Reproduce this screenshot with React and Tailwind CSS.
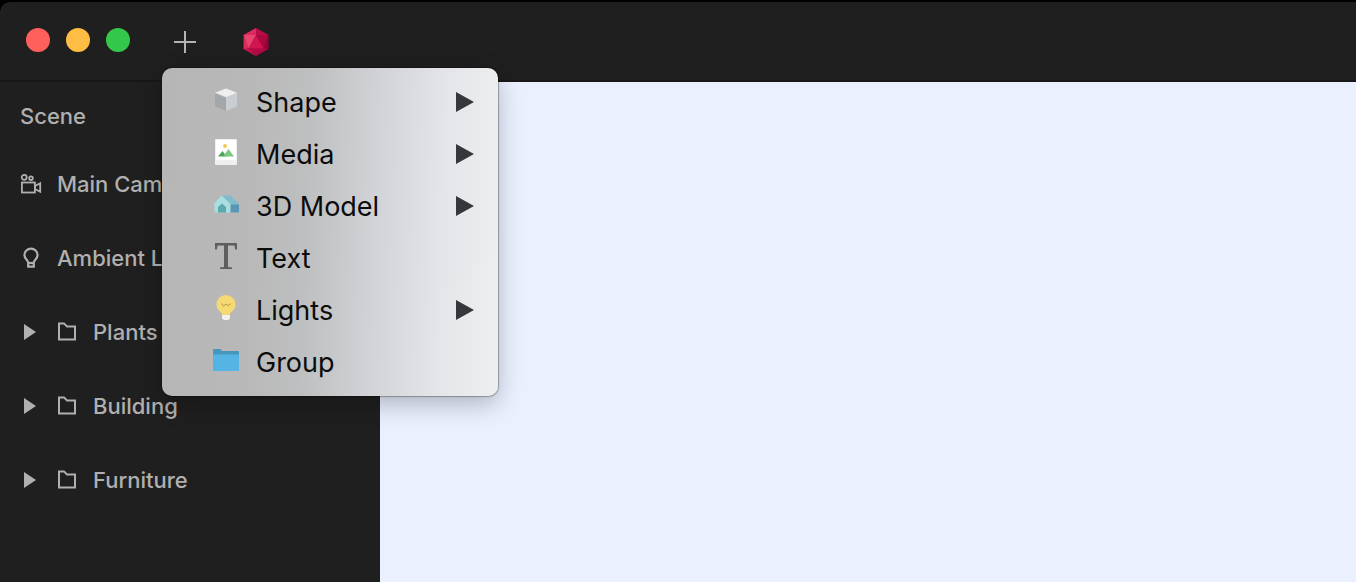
const CameraIcon = () => (
  <svg className="size-6 shrink-0" viewBox="0 0 24 24" fill="none" stroke="#b0b0b0" strokeWidth="1.8" aria-hidden="true">
    <circle cx="5.2" cy="5.3" r="2.5" />
    <circle cx="12" cy="6.2" r="1.8" />
    <rect x="2.9" y="10.500" width="13" height="10" />
    <path d="M16 14l5.200-2.800v8.600L16 17z" />
  </svg>
);

const BulbIcon = () => (
  <svg className="size-6 shrink-0" viewBox="0 0 24 24" fill="none" stroke="#b0b0b0" strokeWidth="2.200" aria-hidden="true">
    <path d="M9.200 16.500c0-2.400-3.800-3.600-3.800-7.400a6.600 6.400 0 0 1 13.200 0c0 3.800-3.800 5-3.800 7.400v4.100H9.200z" />
    <path d="M9.200 17h5.600" />
  </svg>
);

const FolderIcon = () => (
  <svg className="size-5 shrink-0" viewBox="0 0 20 20" fill="none" stroke="#b0b0b0" strokeWidth="2" aria-hidden="true">
    <path d="M2 1.400h5l3 3h8v13H2z" />
  </svg>
);

const GemIcon = () => (
  <svg className="h-7 w-[26px]" viewBox="0 0 26 28" aria-hidden="true">
    <path d="M13 0l12.300 7v14L13 28 .7 21V7z" fill="#b00a45" />
    <path d="M13 0v7L.7 7z" fill="#dd2b5d" />
    <path d="M13 0v7l12.300 0z" fill="#b80d48" />
    <path d="M.7 7L13 7 5.500 20.500z" fill="#e8466f" />
    <path d="M.7 7v14l4.800-.5z" fill="#dc2d5c" />
    <path d="M13 7l7.800 13.500H5.500z" fill="#d01550" />
    <path d="M13 7l12.300 0-4.500 13.500z" fill="#ab0842" />
    <path d="M25.300 7v14l-4.500-.5z" fill="#970039" />
    <path d="M.7 21l4.800-.5L13 28z" fill="#c7154d" />
    <path d="M5.500 20.500h15.300L13 28z" fill="#b20a46" />
  </svg>
);

const CubeArt = () => (
  <>
    <path d="M14 2.500l11 4.300-11 4.400L3 6.800z" fill="#efefef" />
    <path d="M3 6.800l11 4.400V25L3 20.300z" fill="#a3a7aa" />
    <path d="M25 6.800l-11 4.400V25l11-4.700z" fill="#c9ced2" />
    <path d="M3 6.800l11 4.400 11-4.400" fill="none" stroke="#dfe1e3" strokeWidth=".5" />
  </>
);

const MediaArt = () => (
  <>
    <rect x="3" y="1" width="22" height="26" rx="1" fill="#efefef" />
    <rect x="4" y="2" width="20" height="20" fill="#fff" />
    <circle cx="13" cy="8" r="1.900" fill="#f5c452" />
    <path d="M6 18.500l4.500-5.500 4 5.500z" fill="#4aa456" />
    <path d="M11 18.500l5.500-7.500 5.500 7.500z" fill="#7cc77f" />
  </>
);

const HouseArt = () => (
  <>
    <path d="M9.500 5.500h9L27 14v.8h-9z" fill="#7fbdcc" />
    <path d="M18 14.500h9v8h-9z" fill="#5a96b3" />
    <path d="M9.500 5.500L18.500 14v8.500h-16V16L1.300 14.500z" fill="#aadddf" />
    <path d="M6 22.500V17l4-3.500 4 3.500v5.500z" fill="#5aabae" />
  </>
);

const TypeArt = () => (
  <path
    d="M3 1h22v6.500h-1.900L22.500 3.500H16V25l4 .5V27H8v-1.500l4-.5V3.500H5.500L4.900 7.500H3z"
    fill="#5e5e5e"
  />
);

const LightArt = () => (
  <>
    <path d="M10.500 21c0-2.400-6-4.500-6-10.500a9.500 9.500 0 0 1 19 0c0 6-6 8.100-6 10.500z" fill="#f5d972" />
    <path d="M9.500 9.500l2 2.500 2.500-2 2.500 2 2-2.500" fill="none" stroke="#b99838" strokeWidth="1" />
    <path d="M10 21h8v3.500L16 26h-4l-2-1.500z" fill="#f1f1f1" />
  </>
);

const GroupArt = () => (
  <>
    <path d="M1 4q0-1 1-1h6q1 0 2 2h16q1 0 1 1v5H1z" fill="#4696bd" />
    <path d="M1 8.500h26V24q0 1-1 1H2q-1 0-1-1z" fill="#55b4e3" />
  </>
);

const MENU_ITEMS = [
  { label: "Shape", Art: CubeArt, submenu: true },
  { label: "Media", Art: MediaArt, submenu: true },
  { label: "3D Model", Art: HouseArt, submenu: true },
  { label: "Text", Art: TypeArt },
  { label: "Lights", Art: LightArt, submenu: true },
  { label: "Group", Art: GroupArt },
];

const SCENE_ITEMS = [
  { label: "Main Camera", Icon: CameraIcon },
  { label: "Ambient Light", Icon: BulbIcon },
  { label: "Plants", Icon: FolderIcon, folder: true },
  { label: "Building", Icon: FolderIcon, folder: true },
  { label: "Furniture", Icon: FolderIcon, folder: true },
];

const AddMenu = () => (
  <div
    role="menu"
    aria-label="Add"
    className="absolute top-full left-0 z-10 w-[336px] rounded-[10px] bg-[linear-gradient(92deg,#b6b6b6_0%,#b8b8b8_25%,#bebfc0_43%,#c8c9cb_53%,#d4d5d9_65%,#e4e5e9_82%,#eeefef_100%)] py-2 shadow-[0_0_1px_1px_rgba(0,0,0,0.3),0_8px_24px_rgba(0,0,0,0.25)]"
  >
    {MENU_ITEMS.map(({ label, Art, submenu }) => (
      <button
        key={label}
        type="button"
        role="menuitem"
        aria-haspopup={submenu ? "menu" : undefined}
        className="flex h-13 w-full items-center gap-4 pr-6 pl-[50px] text-left text-[27px] text-[#0c0c0c]"
      >
        <svg className="mb-1 size-7 shrink-0" viewBox="0 0 28 28" aria-hidden="true">
          <Art />
        </svg>
        <span className="flex-1 pt-[2px]">{label}</span>
        {submenu && (
          <svg className="h-5 w-[18px]" viewBox="0 0 18 20" aria-hidden="true">
            <path d="M0 0l18 10L0 20z" fill="#36373b" />
          </svg>
        )}
      </button>
    ))}
  </div>
);

const SceneRow = ({ label, Icon, folder }) => (
  <li>
    <button
      type="button"
      className={`flex h-[74px] w-full items-center text-left ${folder ? "gap-4 pl-6" : "gap-[14px] pl-[19px]"}`}
    >
      {folder && (
        <svg className="mr-[5px] h-4 w-3" viewBox="0 0 12 16" aria-hidden="true">
          <path d="M0 0l12 8-12 8z" fill="#b0b0b0" />
        </svg>
      )}
      <Icon />
      <span>{label}</span>
    </button>
  </li>
);

export default function App() {
  return (
    <div className="bg-black pt-[2px] font-['Inter',sans-serif]">
      <div className="flex h-[calc(100vh-2px)] flex-col overflow-hidden rounded-tl-[10px] bg-[#1f1f1f]">
        <header className="flex h-20 shrink-0 items-center border-b-2 border-[#181818] pl-[26px]">
          <div className="flex gap-4 pb-[2px]">
            <button type="button" aria-label="Close" className="size-6 rounded-full bg-[#ff605c]" />
            <button type="button" aria-label="Minimize" className="size-6 rounded-full bg-[#ffbd44]" />
            <button type="button" aria-label="Zoom" className="size-6 rounded-full bg-[#34c84a]" />
          </div>
          <div className="relative ml-8 flex h-[54px] items-center">
            <button type="button" aria-label="Add object" className="ml-3 pt-[2px]">
              <svg className="size-[22px]" viewBox="0 0 22 22" aria-hidden="true">
                <path d="M11 0v22M0 11h22" stroke="#b4b4b4" strokeWidth="2" />
              </svg>
            </button>
            <AddMenu />
          </div>
          <button type="button" aria-label="Materials" className="ml-[47px] pt-[2px]">
            <GemIcon />
          </button>
        </header>

        <div className="flex min-h-0 flex-1">
          <nav aria-label="Scene" className="w-[380px] shrink-0 text-[22px] font-medium text-[#b0b0b0]">
            <h2 className="flex h-[65px] items-center pt-1 pl-5">Scene</h2>
            <ul>
              {SCENE_ITEMS.map((item) => (
                <SceneRow key={item.label} {...item} />
              ))}
            </ul>
          </nav>
          <main className="flex-1 bg-[#ebf0ff]" />
        </div>
      </div>
    </div>
  );
}
